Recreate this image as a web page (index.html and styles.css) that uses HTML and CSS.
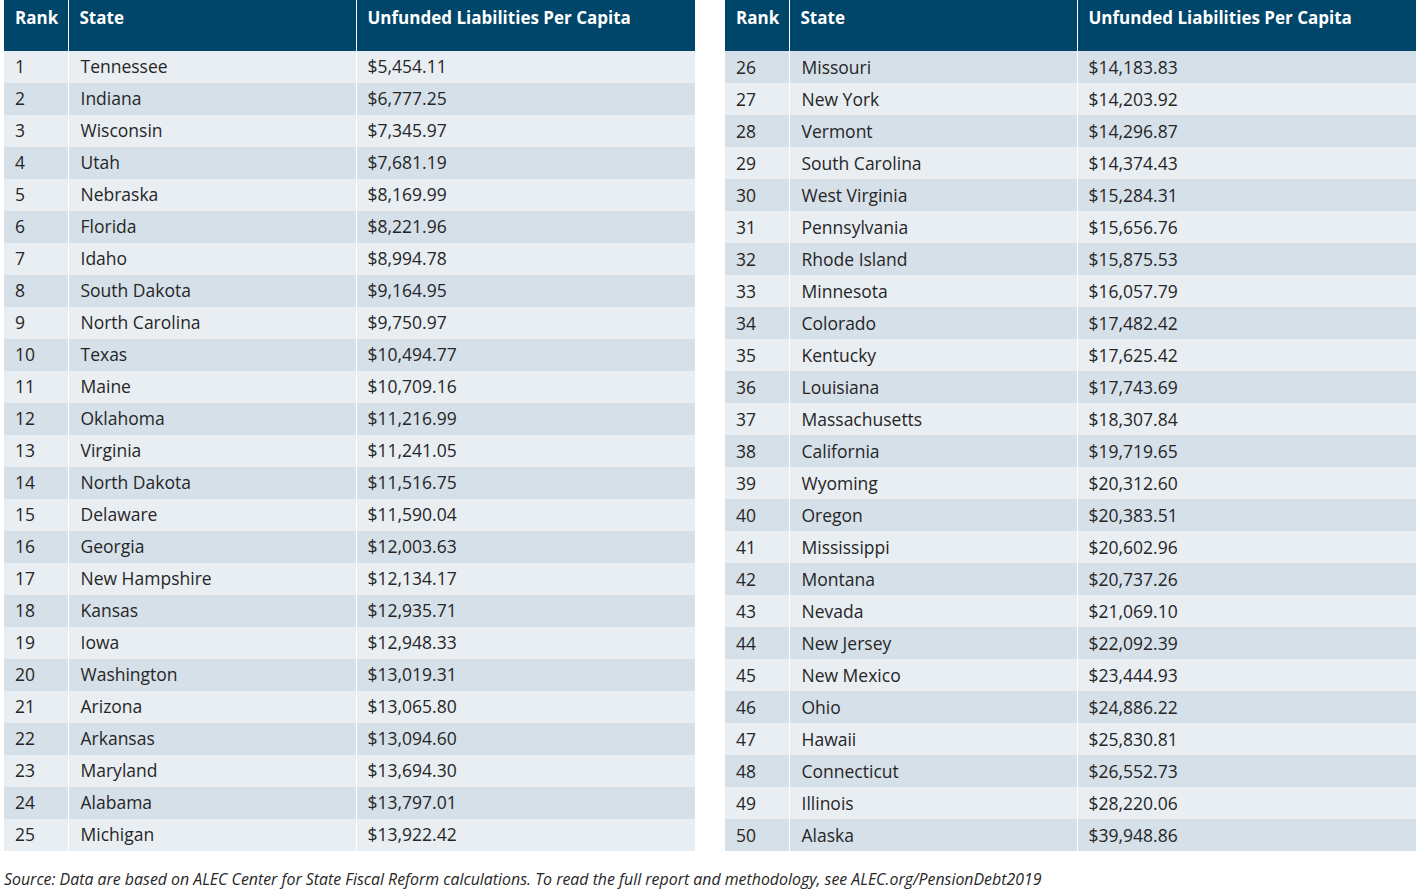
FILE: index.html
```html
<!DOCTYPE html>
<html>
<head>
<meta charset="utf-8">
<link rel="stylesheet" href="styles.css">
</head>
<body>
<div class="page">
  <div class="tables">
    <table class="rank-table rank-table--first">
      <thead>
        <tr><th class="c-rank">Rank</th><th class="c-state">State</th><th class="c-val">Unfunded Liabilities Per Capita</th></tr>
      </thead>
      <tbody>
        <tr><td>1</td><td>Tennessee</td><td>$5,454.11</td></tr>
        <tr><td>2</td><td>Indiana</td><td>$6,777.25</td></tr>
        <tr><td>3</td><td>Wisconsin</td><td>$7,345.97</td></tr>
        <tr><td>4</td><td>Utah</td><td>$7,681.19</td></tr>
        <tr><td>5</td><td>Nebraska</td><td>$8,169.99</td></tr>
        <tr><td>6</td><td>Florida</td><td>$8,221.96</td></tr>
        <tr><td>7</td><td>Idaho</td><td>$8,994.78</td></tr>
        <tr><td>8</td><td>South Dakota</td><td>$9,164.95</td></tr>
        <tr><td>9</td><td>North Carolina</td><td>$9,750.97</td></tr>
        <tr><td>10</td><td>Texas</td><td>$10,494.77</td></tr>
        <tr><td>11</td><td>Maine</td><td>$10,709.16</td></tr>
        <tr><td>12</td><td>Oklahoma</td><td>$11,216.99</td></tr>
        <tr><td>13</td><td>Virginia</td><td>$11,241.05</td></tr>
        <tr><td>14</td><td>North Dakota</td><td>$11,516.75</td></tr>
        <tr><td>15</td><td>Delaware</td><td>$11,590.04</td></tr>
        <tr><td>16</td><td>Georgia</td><td>$12,003.63</td></tr>
        <tr><td>17</td><td>New Hampshire</td><td>$12,134.17</td></tr>
        <tr><td>18</td><td>Kansas</td><td>$12,935.71</td></tr>
        <tr><td>19</td><td>Iowa</td><td>$12,948.33</td></tr>
        <tr><td>20</td><td>Washington</td><td>$13,019.31</td></tr>
        <tr><td>21</td><td>Arizona</td><td>$13,065.80</td></tr>
        <tr><td>22</td><td>Arkansas</td><td>$13,094.60</td></tr>
        <tr><td>23</td><td>Maryland</td><td>$13,694.30</td></tr>
        <tr><td>24</td><td>Alabama</td><td>$13,797.01</td></tr>
        <tr><td>25</td><td>Michigan</td><td>$13,922.42</td></tr>
      </tbody>
    </table>
    <table class="rank-table rank-table--alt">
      <thead>
        <tr><th class="c-rank">Rank</th><th class="c-state">State</th><th class="c-val">Unfunded Liabilities Per Capita</th></tr>
      </thead>
      <tbody>
        <tr><td>26</td><td>Missouri</td><td>$14,183.83</td></tr>
        <tr><td>27</td><td>New York</td><td>$14,203.92</td></tr>
        <tr><td>28</td><td>Vermont</td><td>$14,296.87</td></tr>
        <tr><td>29</td><td>South Carolina</td><td>$14,374.43</td></tr>
        <tr><td>30</td><td>West Virginia</td><td>$15,284.31</td></tr>
        <tr><td>31</td><td>Pennsylvania</td><td>$15,656.76</td></tr>
        <tr><td>32</td><td>Rhode Island</td><td>$15,875.53</td></tr>
        <tr><td>33</td><td>Minnesota</td><td>$16,057.79</td></tr>
        <tr><td>34</td><td>Colorado</td><td>$17,482.42</td></tr>
        <tr><td>35</td><td>Kentucky</td><td>$17,625.42</td></tr>
        <tr><td>36</td><td>Louisiana</td><td>$17,743.69</td></tr>
        <tr><td>37</td><td>Massachusetts</td><td>$18,307.84</td></tr>
        <tr><td>38</td><td>California</td><td>$19,719.65</td></tr>
        <tr><td>39</td><td>Wyoming</td><td>$20,312.60</td></tr>
        <tr><td>40</td><td>Oregon</td><td>$20,383.51</td></tr>
        <tr><td>41</td><td>Mississippi</td><td>$20,602.96</td></tr>
        <tr><td>42</td><td>Montana</td><td>$20,737.26</td></tr>
        <tr><td>43</td><td>Nevada</td><td>$21,069.10</td></tr>
        <tr><td>44</td><td>New Jersey</td><td>$22,092.39</td></tr>
        <tr><td>45</td><td>New Mexico</td><td>$23,444.93</td></tr>
        <tr><td>46</td><td>Ohio</td><td>$24,886.22</td></tr>
        <tr><td>47</td><td>Hawaii</td><td>$25,830.81</td></tr>
        <tr><td>48</td><td>Connecticut</td><td>$26,552.73</td></tr>
        <tr><td>49</td><td>Illinois</td><td>$28,220.06</td></tr>
        <tr><td>50</td><td>Alaska</td><td>$39,948.86</td></tr>
      </tbody>
    </table>
  </div>
  <p class="source">Source: Data are based on ALEC Center for State Fiscal Reform calculations. To read the full report and methodology, see ALEC.org/PensionDebt2019</p>
</div>
</body>
</html>
```

FILE: styles.css
```css
html, body {
  margin: 0;
  padding: 0;
  background: #ffffff;
}

.page {
  padding: 0 4px;
  font-family: "Open Sans", "Liberation Sans", sans-serif;
  color: #262626;
}

.tables {
  display: grid;
  grid-template-columns: 691px 691px;
  column-gap: 30px;
  align-items: start;
}

.rank-table {
  width: 691px;
  border-collapse: collapse;
  table-layout: fixed;
  font-size: 17.5px;
}

.rank-table th,
.rank-table td {
  padding: 0 0 0 11px;
  text-align: left;
  border-left: 1px solid #ffffff;
  white-space: nowrap;
}

.rank-table th:first-child,
.rank-table td:first-child {
  border-left: none;
}

.c-rank { width: 64px; }
.c-state { width: 288px; }

.rank-table th {
  background: #00466a;
  color: #ffffff;
  font-weight: 700;
  font-size: 17px;
  height: 51px;
  vertical-align: top;
  padding-top: 5px;
  box-sizing: border-box;
  line-height: 26px;
}

.rank-table td {
  height: 32px;
  vertical-align: middle;
  padding-top: 0;
  padding-bottom: 0;
  box-sizing: border-box;
  line-height: 24px;
}

.rank-table--first td {
  padding-bottom: 3px;
}

.rank-table td:nth-child(2) { padding-left: 12px; }

.rank-table tbody tr:nth-child(odd) td { background: #e9eef3; }
.rank-table tbody tr:nth-child(even) td { background: #d6e0e9; }

.rank-table--alt tbody tr:nth-child(odd) td { background: #d6e0e9; }
.rank-table--alt tbody tr:nth-child(even) td { background: #e9eef3; }

.source {
  margin: 17px 0 0 0;
  font-style: italic;
  font-size: 15.9px;
  line-height: 22px;
  color: #262626;
}
```
